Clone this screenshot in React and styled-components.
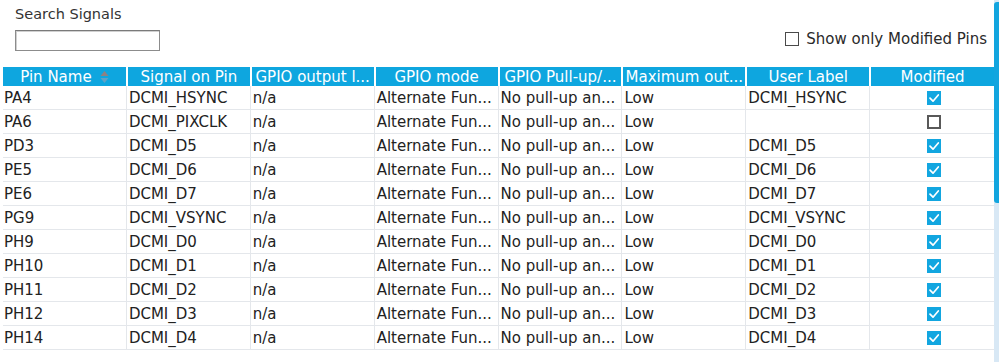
import React from "react";
import styled, { createGlobalStyle } from "styled-components";

const Global = createGlobalStyle`
  html, body { margin: 0; padding: 0; background: #ffffff; }
  body { font-family: "DejaVu Sans", "Liberation Sans", sans-serif; color: #222; }
  * { box-sizing: border-box; }
`;

const Page = styled.div`
  display: flex;
  width: 999px;
  height: 362px;
  overflow: hidden;
  background: #fff;
`;

const Content = styled.div`
  flex: 0 0 994px;
  display: flex;
  flex-direction: column;
`;

const ScrollTrack = styled.div`
  flex: 0 0 5px;
  background: #d8e8f5;
  padding-top: 2px;
  display: flex;
  flex-direction: column;
`;

const ScrollThumb = styled.div`
  height: 201px;
  background: #12a5df;
  border-radius: 3px 0 0 3px;
`;

const TopBar = styled.div`
  display: flex;
  justify-content: space-between;
  align-items: flex-end;
  height: 67px;
  padding: 0 7px 16px 15px;
`;

const SearchBlock = styled.div`
  display: flex;
  flex-direction: column;
  align-self: flex-start;
  padding-top: 5px;
`;

const SearchLabel = styled.div`
  font-size: 14.5px;
  line-height: 18px;
  color: #333;
`;

const SearchInput = styled.input`
  margin-top: 7px;
  width: 145px;
  height: 21px;
  border: 1px solid #8c8c8c;
  border-top-color: #7a7a7a;
  box-shadow: inset 1px 1px 0 #d0d0d0;
  background: #fff;
  padding: 0 3px;
  font-size: 13px;
  outline: none;
`;

const ModifiedToggle = styled.label`
  display: flex;
  align-items: center;
  gap: 7px;
  font-size: 15px;
  color: #2a2a2a;
  margin-bottom: 3px;
`;

const SmallBox = styled.span`
  width: 14px;
  height: 14px;
  border: 1px solid #4a4a4a;
  background: #fff;
  display: inline-block;
`;

const Table = styled.div`
  margin-left: 3px;
  width: 991px;
  display: flex;
  flex-direction: column;
`;

const HeaderRow = styled.div`
  display: grid;
  grid-template-columns: repeat(8, 1fr);
  height: 19px;
`;

const HeaderCell = styled.div`
  background: #0ea6df;
  color: #fff;
  font-size: 15px;
  line-height: 19px;
  padding-top: 1px;
  margin: 0 ${(p) => (p.$last ? "0" : "1px")} 0 ${(p) => (p.$first ? "0" : "1px")};
  display: flex;
  justify-content: center;
  align-items: center;
  gap: 8px;
  white-space: nowrap;
  overflow: hidden;
`;

const Row = styled.div`
  display: grid;
  grid-template-columns: repeat(8, 1fr);
  height: 24px;
  border-bottom: 1px solid #e4e7eb;
`;

const Cell = styled.div`
  font-size: 15px;
  line-height: 23px;
  padding-left: ${(p) => (p.$first ? "1px" : "2px")};
  padding-top: ${(p) => (p.$center ? "0" : "2px")};
  border-right: ${(p) => (p.$last ? "none" : "1px solid #e4e7eb")};
  white-space: nowrap;
  overflow: hidden;
  color: #222;
  display: flex;
  align-items: center;
  justify-content: ${(p) => (p.$center ? "center" : "flex-start")};
`;

const CheckBox = styled.span`
  width: 14px;
  height: 14px;
  display: inline-flex;
  align-items: center;
  justify-content: center;
  background: ${(p) => (p.$checked ? "#12a6e0" : "#fff")};
  border: ${(p) => (p.$checked ? "none" : "2px solid #595959")};
  margin-left: 2px;
`;

const SortIcon = () => (
  <svg width="9" height="14" viewBox="0 0 9 14">
    <polygon points="0.5,6 4.5,1 8.5,6" fill="#8f8182" />
    <polygon points="0.5,8 4.5,13 8.5,8" fill="#5ea2c6" />
  </svg>
);

const Check = () => (
  <svg width="14" height="14" viewBox="0 0 14 14">
    <polyline
      points="3,7.2 6,10.2 11.3,4"
      fill="none"
      stroke="#fff"
      strokeWidth="1.7"
      strokeLinecap="round"
      strokeLinejoin="round"
    />
  </svg>
);

const headers = [
  "Pin Name",
  "Signal on Pin",
  "GPIO output l...",
  "GPIO mode",
  "GPIO Pull-up/...",
  "Maximum out...",
  "User Label",
  "Modified",
];

const rows = [
  ["PA4", "DCMI_HSYNC", "DCMI_HSYNC", true],
  ["PA6", "DCMI_PIXCLK", "", false],
  ["PD3", "DCMI_D5", "DCMI_D5", true],
  ["PE5", "DCMI_D6", "DCMI_D6", true],
  ["PE6", "DCMI_D7", "DCMI_D7", true],
  ["PG9", "DCMI_VSYNC", "DCMI_VSYNC", true],
  ["PH9", "DCMI_D0", "DCMI_D0", true],
  ["PH10", "DCMI_D1", "DCMI_D1", true],
  ["PH11", "DCMI_D2", "DCMI_D2", true],
  ["PH12", "DCMI_D3", "DCMI_D3", true],
  ["PH14", "DCMI_D4", "DCMI_D4", true],
];

export default function App() {
  return (
    <>
      <Global />
      <Page>
        <Content>
          <TopBar>
            <SearchBlock>
              <SearchLabel>Search Signals</SearchLabel>
              <SearchInput type="text" />
            </SearchBlock>
            <ModifiedToggle>
              <SmallBox />
              Show only Modified Pins
            </ModifiedToggle>
          </TopBar>
          <Table>
            <HeaderRow>
              {headers.map((h, i) => (
                <HeaderCell key={h} $first={i === 0} $last={i === headers.length - 1}>
                  {h}
                  {i === 0 && <SortIcon />}
                </HeaderCell>
              ))}
            </HeaderRow>
            {rows.map(([pin, sig, label, mod]) => (
              <Row key={pin}>
                <Cell $first>{pin}</Cell>
                <Cell>{sig}</Cell>
                <Cell>n/a</Cell>
                <Cell>Alternate Fun...</Cell>
                <Cell>No pull-up an...</Cell>
                <Cell>Low</Cell>
                <Cell>{label}</Cell>
                <Cell $last $center>
                  <CheckBox $checked={mod}>{mod && <Check />}</CheckBox>
                </Cell>
              </Row>
            ))}
          </Table>
        </Content>
        <ScrollTrack>
          <ScrollThumb />
        </ScrollTrack>
      </Page>
    </>
  );
}
